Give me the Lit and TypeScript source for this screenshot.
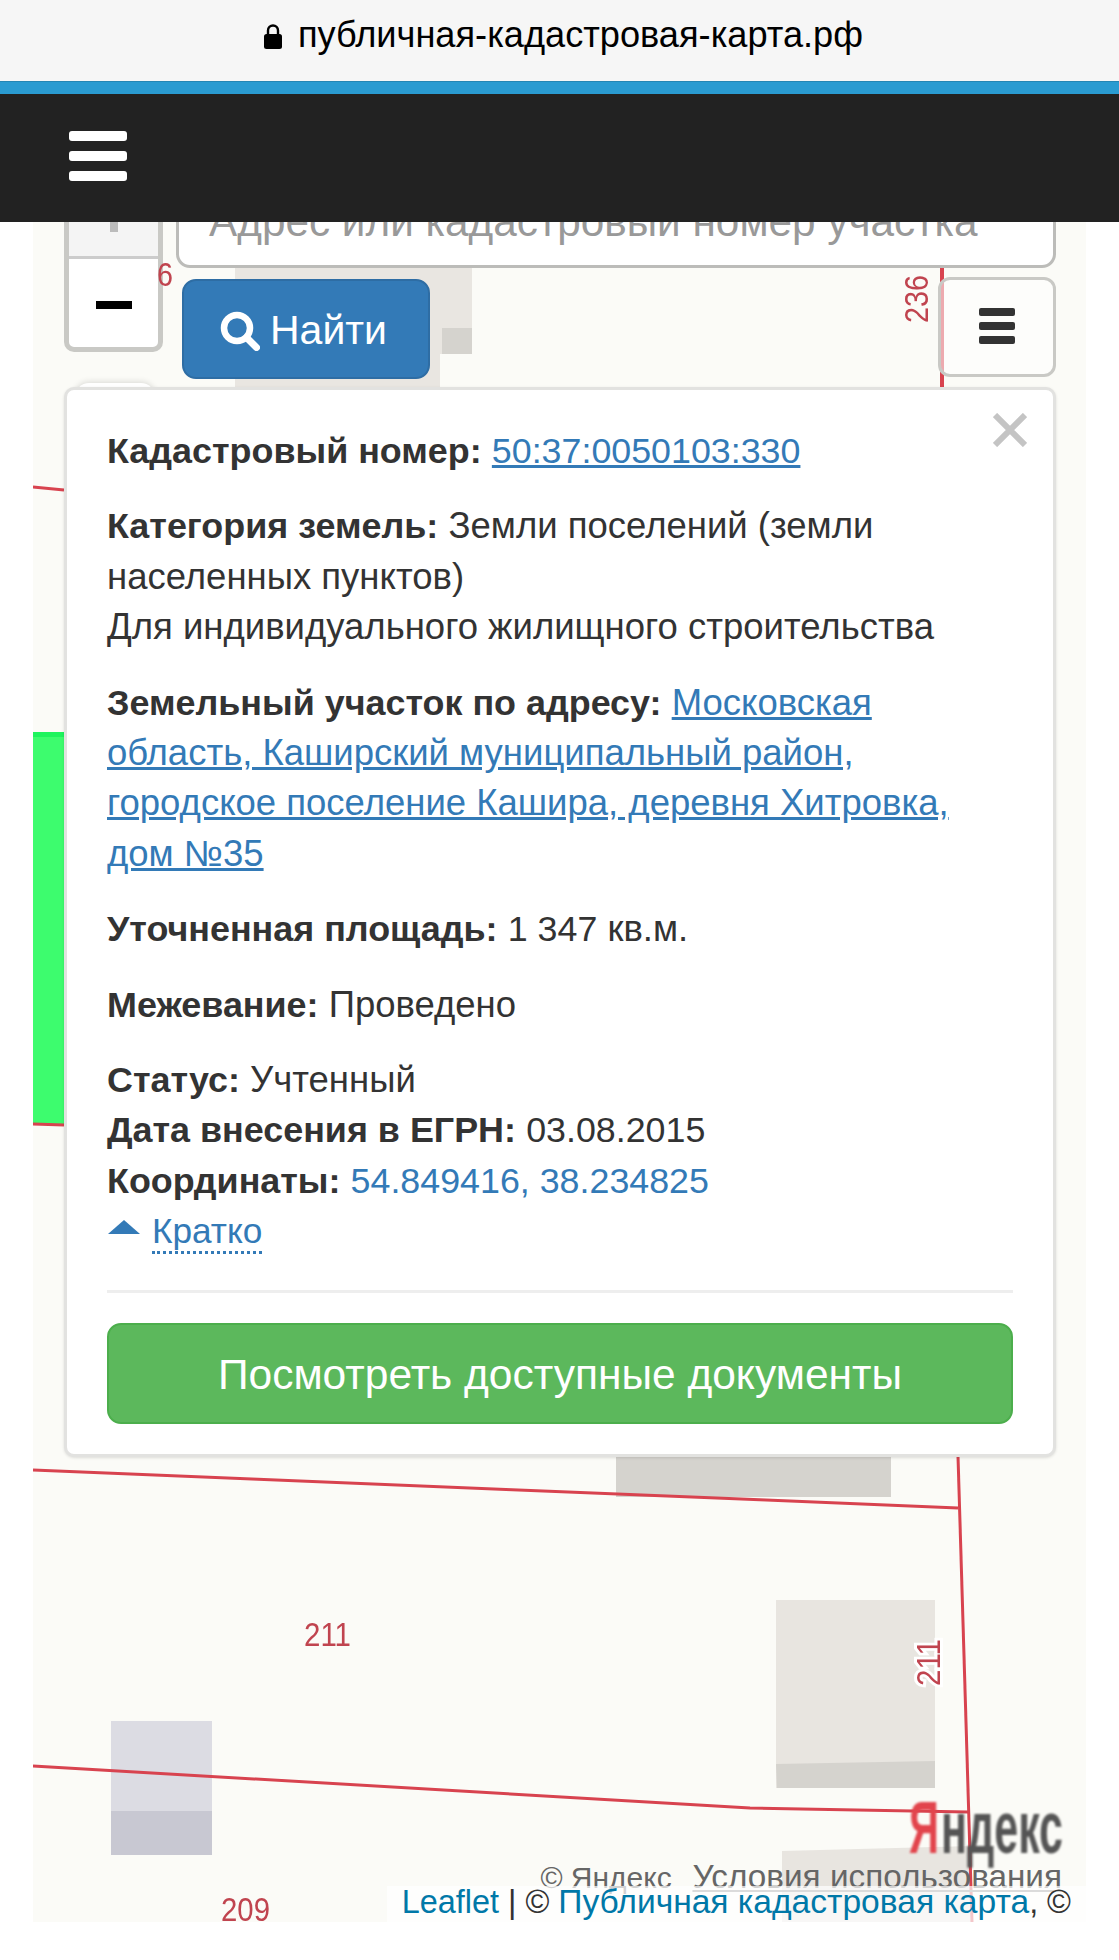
import { LitElement, html, css } from "lit";
import { customElement } from "lit/decorators.js";

@customElement("app-root")
export class AppRoot extends LitElement {
  static styles = css`
    :host { display: block; height: 1960px; background: #fff; font-family: "Liberation Sans", Arial, sans-serif; color: #333; }
    .urlbar { height: 81px; background: #f6f6f6; display: flex; align-items: center; justify-content: center; gap: 16px; padding-bottom: 11px; box-sizing: border-box; padding-left: 8px; font-size: 36.2px; color: #000; }
    .urlbar svg { display: block; width: 18px; height: 26px; margin-top: 1px; }
    .blue { height: 13px; background: #2a9bd1; border-top: 1px solid #2586b4; box-sizing: border-box; }
    .nav { position: relative; z-index: 5; height: 128px; background: #222; display: flex; flex-direction: column; justify-content: center; gap: 10px; padding-left: 69px; padding-bottom: 5px; box-sizing: border-box; }
    .nav i { display: block; width: 58px; height: 10px; border-radius: 3px; background: #fff; }
    .map { position: relative; margin-left: 33px; width: 1053px; height: 1700px; background: #fbfbf7; }
    .canvas { position: absolute; inset: 0; width: 100%; height: 100%; display: block; overflow: hidden; }
    .canvas text { font-family: "Liberation Sans", Arial, sans-serif; fill: #c0444f; font-size: 33px; filter: blur(.4px); }
    .canvas .ya { font-size: 75px; font-weight: bold; filter: blur(1px); }
    .lines { filter: blur(.5px); }

    .zoom { position: absolute; left: 31px; top: -62px; width: 99px; height: 192px; box-sizing: border-box; border: 5px solid #c9c9c5; border-radius: 10px; background: #fff; overflow: hidden; display: flex; flex-direction: column; }
    .zoom-in { height: 91px; flex: none; background: #f4f4f4; border-bottom: 3px solid #ccc; display: flex; justify-content: center; align-items: flex-end; }
    .zoom-in b { display: block; width: 8px; height: 22px; margin-bottom: 24px; background: #bbb; }
    .zoom-out { flex: 1; display: flex; justify-content: center; align-items: center; }
    .zoom-out b { display: block; width: 36px; height: 8px; background: #000; margin-top: 3px; }
    .layer2 { position: absolute; left: 42px; top: 161px; width: 80px; height: 30px; background: #fff; border-radius: 14px; box-shadow: 0 -1px 6px rgba(0,0,0,.14); }

    .search { position: absolute; left: 143px; top: -72px; width: 880px; height: 118px; box-sizing: border-box; border: 3px solid #bcbcb9; border-radius: 14px; background: #fff; color: #999; font-size: 42.3px; line-height: 46px; padding: 46px 0 0 30px; white-space: nowrap; overflow: hidden; }
    .find { position: absolute; left: 149px; top: 57px; width: 248px; height: 100px; box-sizing: border-box; background: #337ab7; border: 2px solid #2e6da4; border-radius: 14px; color: #fff; font-size: 41px; display: flex; align-items: center; justify-content: center; gap: 10px; padding: 3px 5px 0 0; }
    .find svg { display: block; width: 40px; height: 40px; }
    .menu { position: absolute; left: 905px; top: 55px; width: 118px; height: 100px; box-sizing: border-box; border: 3px solid #c9c9c5; border-radius: 12px; background: rgba(255,255,255,.55); display: flex; flex-direction: column; justify-content: center; align-items: center; gap: 6px; padding-bottom: 3px; }
    .menu i { display: block; width: 36px; height: 8px; border-radius: 2px; background: #333; }

    .panel { position: absolute; left: 31px; top: 165px; width: 992px; box-sizing: border-box; background: #fff; border: 3px solid #e2e2e0; border-radius: 10px; box-shadow: 0 1px 3px rgba(0,0,0,.12); padding: 36px 40px 30px 40px; font-size: 36.5px; line-height: 50.4px; }
    .panel b { font-size: 35.9px; }
    .panel .num { font-size: 35.8px; }
    .panel p { margin: 0 0 25px; }
    .panel a { color: #337ab7; text-decoration: underline; }
    .panel a.plain { text-decoration: none; }
    .close { position: absolute; right: 26px; top: 23px; width: 34px; height: 34px; display: block; }
    .toggle { display: flex; align-items: center; gap: 12px; height: 50px; }
    .toggle svg { display: block; width: 32px; height: 14px; margin: -8px 0 0 1px; }
    .toggle span { color: #337ab7; border-bottom: 3px dotted #337ab7; line-height: 40px; margin-top: 2px; font-size: 35.2px; }
    .rule { height: 3px; background: #eee; margin: 34px 0 30px; }
    .docs { height: 101px; box-sizing: border-box; background: #5cb85c; border: 2px solid #4cae4c; border-radius: 14px; color: #fff; font-size: 42.5px; padding-top: 2px; display: flex; align-items: center; justify-content: center; }

    .ycopy { position: absolute; right: 24px; top: 1637px; font-size: 30px; line-height: 36px; color: #666; white-space: pre; }
    .ycopy span { margin-left: 4px; font-size: 33.3px; text-decoration: underline; text-decoration-color: #888; text-decoration-thickness: 2px; text-underline-offset: 2px; }
    .attr { position: absolute; right: 0; bottom: 0; height: 36px; padding: 0 15px 5px 15px; box-sizing: border-box; background: rgba(255,255,255,.7); font-size: 32.4px; line-height: 31px; color: #333; white-space: nowrap; }
    .attr a { color: #0078a8; text-decoration: none; }
    .attr a.ru { font-size: 33.6px; }
  `;

  render() {
    return html`
      <div class="urlbar">
        <svg viewBox="0 0 18 26"><path d="M4 12V7.5a5 5 0 0 1 10 0V12" fill="none" stroke="#000" stroke-width="2.4"/><rect x="0" y="11" width="18" height="15" rx="2.5" fill="#000"/></svg>
        <span>публичная-кадастровая-карта.рф</span>
      </div>
      <div class="blue"></div>
      <div class="nav"><i></i><i></i><i></i></div>
      <div class="map">
        <div class="zoom"><div class="zoom-in"><b></b></div><div class="zoom-out"><b></b></div></div>
        <svg class="canvas" viewBox="33 222 1053 1700">
          <rect x="235" y="268" width="237" height="120" fill="#e9e6e1"/>
          <rect x="440" y="354" width="32" height="34" fill="#fbfbf7"/>
          <rect x="442" y="328" width="30" height="26" fill="#d5d3ce"/>
          <rect x="616" y="1456" width="275" height="41" fill="#d5d3ce"/>
          <rect x="776" y="1600" width="159" height="188" fill="#e8e5e0"/>
          <path d="M776 1764L935 1761V1788H777Z" fill="#d5d3ce"/>
          <rect x="111" y="1721" width="101" height="90" fill="#dcdce3"/>
          <rect x="111" y="1811" width="101" height="44" fill="#c8c8d2"/>
          <path d="M782 1851L972 1846V1922H782Z" fill="#e8e5e0"/>
          <rect x="33" y="732" width="31" height="393" fill="#3dfc6e"/>
          <rect x="33" y="732" width="31" height="5" fill="#1ef45d"/>
          <g class="lines" fill="none" stroke="#d8434f" stroke-width="3">
            <path d="M33 487L64 490"/>
            <path d="M33 1124L64 1125"/>
            <path d="M33 1470L958 1508"/>
            <path d="M958 1456L972 1922"/>
            <path d="M33 1766L750 1808L968 1812"/>
            <path d="M942 268V388" stroke-width="4"/>
          </g>
          <text x="157" y="286" textLength="16" lengthAdjust="spacingAndGlyphs">6</text>
          <text transform="translate(928,323) rotate(-90)" textLength="48" lengthAdjust="spacingAndGlyphs">236</text>
          <text x="304" y="1646" font-size="36" textLength="47" lengthAdjust="spacingAndGlyphs">211</text>
          <text transform="translate(940,1686) rotate(-90)" stroke="#fff" stroke-width="6" paint-order="stroke" textLength="47" lengthAdjust="spacingAndGlyphs">211</text>
          <text x="221" y="1921" textLength="49" lengthAdjust="spacingAndGlyphs">209</text>
          <text class="ya" x="909" y="1853" textLength="30" lengthAdjust="spacingAndGlyphs" style="fill:#e2444c">Я</text>
          <text class="ya" x="941" y="1853" textLength="122" lengthAdjust="spacingAndGlyphs" style="fill:#555">ндекс</text>
        </svg>
        <div class="layer2"></div>
        <div class="search">Адрес или кадастровый номер участка</div>
        <div class="find">
          <svg viewBox="0 0 40 40"><circle cx="17" cy="17" r="13" fill="none" stroke="#fff" stroke-width="6.5"/><path d="M26.5 26.5L36.5 36.5" stroke="#fff" stroke-width="7" stroke-linecap="round"/></svg>
          <span>Найти</span>
        </div>
        <div class="menu"><i></i><i></i><i></i></div>
        <div class="panel">
          <svg class="close" viewBox="0 0 34 34"><path d="M2 2L32 32M32 2L2 32" stroke="#c4c4c4" stroke-width="6"/></svg>
          <p><b>Кадастровый номер:</b> <a class="num" href="#">50:37:0050103:330</a></p>
          <p><b>Категория земель:</b> Земли поселений (земли<br>населенных пунктов)<br>Для индивидуального жилищного строительства</p>
          <p><b>Земельный участок по адресу:</b> <a href="#">Московская<br>область, Каширский муниципальный район,<br>городское поселение Кашира, деревня Хитровка,<br>дом №35</a></p>
          <p><b>Уточненная площадь:</b> <span class="num">1 347</span> кв.м.</p>
          <p><b>Межевание:</b> Проведено</p>
          <div><b>Статус:</b> Учтенный</div>
          <div><b>Дата внесения в ЕГРН:</b> <span class="num">03.08.2015</span></div>
          <div><b>Координаты:</b> <a class="plain num" href="#">54.849416, 38.234825</a></div>
          <div class="toggle">
            <svg viewBox="0 0 32 14"><path d="M16 0L32 14H0Z" fill="#337ab7"/></svg>
            <span>Кратко</span>
          </div>
          <div class="rule"></div>
          <div class="docs">Посмотреть доступные документы</div>
        </div>
        <div class="ycopy">© Яндекс  <span>Условия использования</span></div>
        <div class="attr"><a href="#">Leaflet</a> | © <a class="ru" href="#">Публичная кадастровая карта</a>, ©</div>
      </div>
    `;
  }
}
